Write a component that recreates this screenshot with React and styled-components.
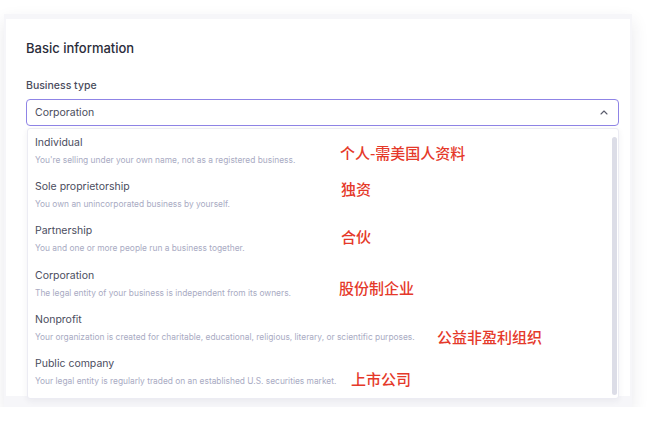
import React from 'react'
import styled, { createGlobalStyle } from 'styled-components';

const GlobalStyle = createGlobalStyle`
  body {
    margin: 0;
    background: #ffffff;
    font-family: Inter, "Noto Sans", sans-serif;
  }
`;

const Frame = styled.div`
  margin: 14px 0 0 4px;
  width: 624px;
  padding: 5px 2px 11px 2px;
  background: #f6f6f9;
  box-shadow: 0 7px 16px rgba(40, 40, 70, 0.1);
`;

const Card = styled.div`
  height: 377px;
  background: #ffffff;
  padding: 21px 11px 0 20px;
  box-sizing: border-box;
`;

const Heading = styled.h2`
  margin: 0;
  font-size: 13px;
  line-height: 16px;
  font-weight: 500;
  color: #2a2c3a;
`;

const Label = styled.div`
  margin-top: 23px;
  font-size: 10.5px;
  line-height: 13px;
  font-weight: 500;
  color: #4a4c5c;
`;

const Select = styled.div`
  margin-top: 7px;
  height: 27px;
  box-sizing: border-box;
  border: 1px solid #8f84e6;
  border-radius: 4px;
  display: flex;
  align-items: center;
  justify-content: space-between;
  padding: 0 10px 0 8px;
  font-size: 10.5px;
  color: #4a4c5c;
`;

const Menu = styled.div`
  position: relative;
  margin: 2px 0 0 1px;
  border: 1px solid #ececf3;
  border-radius: 3px;
  background: #ffffff;
  padding-bottom: 4px;
  box-shadow: 0 2px 6px rgba(40, 40, 70, 0.06);
`;

const Thumb = styled.div`
  position: absolute;
  right: 1px;
  top: 8px;
  bottom: 3px;
  width: 5px;
  border-radius: 3px;
  background: #dcdde7;
`;

const Option = styled.div`
  position: relative;
  padding: 7px 7px;
  height: 44.2px;
  box-sizing: border-box;
`;

const Title = styled.div`
  font-size: 10.5px;
  line-height: 14px;
  color: #4b4d5e;
`;

const Desc = styled.div`
  margin-top: 4px;
  font-size: 8.4px;
  line-height: 12px;
  color: #a9abc3;
`;

const Note = styled.span`
  position: absolute;
  left: ${p => p.$left}px;
  top: ${p => p.$top}px;
  font-family: "Noto Sans CJK SC", sans-serif;
  font-size: 15px;
  font-weight: 500;
  line-height: 18px;
  color: #e5392a;
  white-space: nowrap;
`;

const options = [
  { title: 'Individual', desc: "You're selling under your own name, not as a registered business.", note: '个人-需美国人资料', left: 312, top: 15 },
  { title: 'Sole proprietorship', desc: 'You own an unincorporated business by yourself.', note: '独资', left: 313, top: 7 },
  { title: 'Partnership', desc: 'You and one or more people run a business together.', note: '合伙', left: 313, top: 11 },
  { title: 'Corporation', desc: 'The legal entity of your business is independent from its owners.', note: '股份制企业', left: 311, top: 17 },
  { title: 'Nonprofit', desc: 'Your organization is created for charitable, educational, religious, literary, or scientific purposes.', note: '公益非盈利组织', left: 409, top: 22 },
  { title: 'Public company', desc: 'Your legal entity is regularly traded on an established U.S. securities market.', note: '上市公司', left: 323, top: 20 },
];

function Chevron() {
  return (
    <svg width="8" height="5" viewBox="0 0 8 5" fill="none">
      <path d="M1 4L4 1L7 4" stroke="#5a5c6c" strokeWidth="1.1" strokeLinecap="round" strokeLinejoin="round" />
    </svg>
  );
}

function App() {
  return (
    <>
      <GlobalStyle />
      <Frame>
        <Card>
          <Heading>Basic information</Heading>
          <Label>Business type</Label>
          <Select>
            <span>Corporation</span>
            <Chevron />
          </Select>
          <Menu>
            <Thumb />
            {options.map(o => (
              <Option key={o.title}>
                <Title>{o.title}</Title>
                <Desc>{o.desc}</Desc>
                <Note $left={o.left} $top={o.top}>{o.note}</Note>
              </Option>
            ))}
          </Menu>
        </Card>
      </Frame>
    </>
  );
}

export default App
